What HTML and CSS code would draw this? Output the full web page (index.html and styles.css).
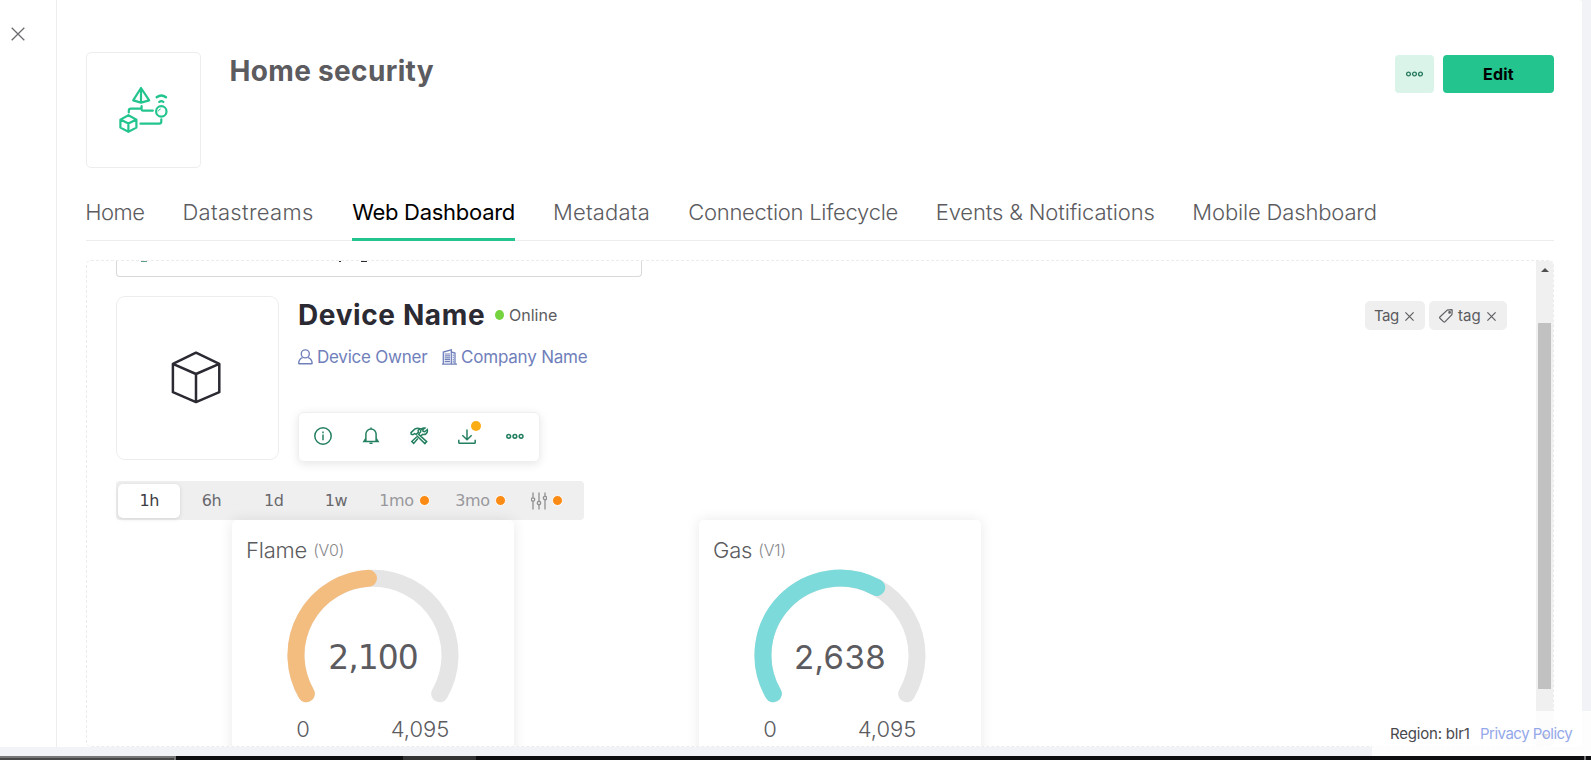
FILE: index.html
```html
<!DOCTYPE html>
<html lang="en">
<head>
<meta charset="utf-8">
<title>Home security</title>
<link rel="stylesheet" href="styles.css">
</head>
<body>
<div class="page">
  <div class="shell">
    <aside class="rail">
      <svg class="rail-close" width="14" height="14" viewBox="0 0 14 14"><path d="M.7.7l12.6 12.6M13.3.7L.7 13.3"/></svg>
    </aside>
    <main class="main">
      <header class="header">
        <div class="logo">
          <svg width="60" height="60" viewBox="114 80 60 60" fill="none" stroke="#24c48e" stroke-width="2.200" stroke-linejoin="round" stroke-linecap="round">
            <path d="M141 88l-7.800 12.400 7.800 2.200 8.200-2.200zM141 88v14.400"/>
            <path d="M141.600 106v2.700M128.800 112.400v-1.600q0-2.100 2.100-2.100h9.600q1.200 0 1.200 1t1.200 1h9.900"/>
            <path d="M140.500 123.700h18.600q2.200 0 2.200-2.200v-2.200"/>
            <circle cx="161.300" cy="111.400" r="5.200"/>
            <path d="M158.300 111a3 3 0 0 1 2-2" stroke-width="1"/>
            <path d="M156.700 97.200q4.600-3.600 9.300 0" stroke-width="2.400"/>
            <path d="M159.200 101.800q2.100-1.400 4.200 0"/>
            <path d="M128.400 115.200l8 4.400v8l-8 4.200-8-4.200v-8zM120.400 119.600l8 4 8-4M128.400 123.600v8"/>
          </svg>
        </div>
        <h1 class="title">Home security</h1>
        <div class="actions">
          <button class="btn-more"><svg width="18" height="6" viewBox="0 0 18 6" fill="none" stroke="#2a7c60" stroke-width="1.400"><circle cx="2.500" cy="3" r="1.900"/><circle cx="8.500" cy="3" r="1.900"/><circle cx="14.500" cy="3" r="1.900"/></svg></button>
          <button class="btn-edit">Edit</button>
        </div>
      </header>

      <nav class="tabs">
        <a class="tab t-home">Home</a>
        <a class="tab t-data">Datastreams</a>
        <a class="tab t-web active">Web Dashboard</a>
        <a class="tab t-meta">Metadata</a>
        <a class="tab t-conn">Connection Lifecycle</a>
        <a class="tab t-events">Events &amp; Notifications</a>
        <a class="tab t-mobile">Mobile Dashboard</a>
      </nav>

      <section class="dashboard">
        <div class="viewport">
          <div class="notice"><i class="mark mark-icon"></i><i class="mark mark-comma"></i><i class="mark mark-tail"></i></div>

          <div class="device">
            <div class="device-pic">
              <svg width="52" height="54" viewBox="0 0 52 54" fill="none" stroke="#2b2a33" stroke-width="2.500" stroke-linejoin="round"><path d="M26 1.700L49.300 12.800v28.400L26 51.100 2.900 41.200V12.800zM2.900 12.800L26 23l23.300-10.200M26 23v28"/></svg>
            </div>
            <div class="device-info">
              <div class="name-row">
                <h2 class="device-name">Device Name</h2>
                <span class="status-dot"></span>
                <span class="status">Online</span>
              </div>
              <div class="owner-row">
                <svg width="15" height="16" viewBox="0 0 15 16" fill="none" stroke="#7080bb" stroke-width="1.400"><circle cx="7.300" cy="4.900" r="4"/><path d="M4.500 8.600C2 9.600.700 11.500.700 14.200q0 .600.600.600h12.200q.600 0 .600-.600c0-2.700-1.400-4.600-3.900-5.600"/></svg>
                <span class="owner">Device Owner</span>
                <svg class="building" width="15" height="16" viewBox="0 0 15 16" fill="none" stroke="#7080bb" stroke-width="1.300"><path d="M0 15.200h15M1.300 15V3l8-2.200V15M9.300 3l3.700 1V15"/><path d="M2.600 5h5.400M2.600 6.900h5.400M2.600 8.800h5.400M2.600 10.700h5.400M2.600 12.600h5.400" stroke-width="1.200"/><path d="M11.200 5.500v8.500" stroke-width="1.100" stroke-dasharray="1.600 .6"/></svg>
                <span class="company">Company Name</span>
              </div>
              <div class="toolbar">
                <svg class="tool" width="20" height="20" viewBox="0 0 20 20"><circle cx="10" cy="10" r="8.200"/><path d="M10 8.500v5.800M10 5.600v1.600"/></svg>
                <svg class="tool" width="20" height="20" viewBox="0 0 20 20"><path d="M10 1.400v1.500M4.900 14.700V8.100a5.100 5.100 0 0 1 10.200 0v6.600M4.900 12.500l-2 3h14.200l-2-3"/><path d="M8.500 16.500h3v1.500h-3z" fill="#24805f" stroke="none"/></svg>
                <svg class="tool" width="20" height="20" viewBox="0 0 20 20"><g stroke-width="1.500"><path d="M2.200 8.300L2 6.600 6 2.900c1.500-.8 3.600-.9 5.300-.2L9.100 4.300l.3 1.900-2.200 2.200-1.600-.8-1.800 1.200z"/><path d="M9.100 7.900l8.600 7.700-1.800 2L7.500 9.500M11.800 9.900l1.900-1.500c1.900.3 4-.7 4.600-2.500.3-.9.200-1.700 0-2.400l-2.500 2.200-1.700-.4-.3-1.700 2-1.500c-2.500-.5-4.500 1.300-4.200 3.900L9.900 7.700M8.900 12.600l-4.200 4.800-1.900-1.900 4.800-4.500"/></g></svg>
                <span class="download">
                  <svg class="tool" width="20" height="20" viewBox="0 0 20 20"><path d="M10 3.500v10.200M5.300 9.300l4.700 4.500 4.700-4.500M1.800 13.700v2.800q0 .800.800.800h14.800q.800 0 .800-.800v-2.800"/></svg>
                  <i class="badge"></i>
                </span>
                <svg class="tool" width="20" height="20" viewBox="0 0 20 20"><circle cx="3.700" cy="10.300" r="1.900"/><circle cx="9.900" cy="10.300" r="1.900"/><circle cx="16.100" cy="10.300" r="1.900"/></svg>
              </div>
            </div>
            <div class="tags">
              <span class="tag tag-plain">Tag<svg class="x" width="9" height="9" viewBox="0 0 9 9"><path d="M.4.4l8.200 8.200M8.600.4L.4 8.600"/></svg></span>
              <span class="tag tag-icon"><svg class="tag-glyph" width="14" height="14" viewBox="0 0 14 14" fill="none" stroke="#5e5e63" stroke-width="1.200" stroke-linejoin="round"><path d="M8.200 1.100l4.300-.4q.7 0 .7.700l-.3 4.200-7 7.300q-.6.500-1.200 0L.9 9.200q-.5-.6 0-1.200z"/><circle cx="10.600" cy="3.400" r=".8"/></svg><span class="tag-label">tag</span><svg class="x" width="9" height="9" viewBox="0 0 9 9"><path d="M.4.4l8.200 8.200M8.600.4L.4 8.600"/></svg></span>
            </div>
          </div>

          <div class="ranges">
            <span class="range selected">1h</span>
            <span class="range">6h</span>
            <span class="range">1d</span>
            <span class="range">1w</span>
            <span class="range locked">1mo<i class="dot"></i></span>
            <span class="range locked">3mo<i class="dot"></i></span>
            <span class="range locked filter"><svg width="16" height="18" viewBox="0 0 16 18" fill="none" stroke="#8f8f93" stroke-width="1.300"><path d="M2 .5v5.200M2 9.300v8.200M8 .5v8.700M8 12.800v4.700M14 .5v3.700M14 7.800v9.700"/><circle cx="2" cy="7.500" r="1.700"/><circle cx="8" cy="11" r="1.700"/><circle cx="14" cy="6" r="1.700"/></svg><i class="dot"></i></span>
          </div>

          <div class="cards">
            <article class="card">
              <h3 class="card-title">Flame <span class="pin">(V0)</span></h3>
              <div class="gauge">
                <svg width="174" height="135" viewBox="0 0 174 135" fill="none" stroke-width="17" stroke-linecap="round"><path stroke="#e5e5e5" d="M20.300 124.700A77 77 0 1 1 153.700 124.700"/><path stroke="#f4bd80" d="M20.300 124.700A77 77 0 0 1 82.500 9.300"/></svg>
                <span class="value">2,100</span>
              </div>
              <div class="limits"><span>0</span><span>4,095</span></div>
            </article>
            <article class="card">
              <h3 class="card-title">Gas <span class="pin">(V1)</span></h3>
              <div class="gauge">
                <svg width="174" height="135" viewBox="0 0 174 135" fill="none" stroke-width="17" stroke-linecap="round"><path stroke="#e5e5e5" d="M20.300 124.700A77 77 0 1 1 153.700 124.700"/><path stroke="#7cdbda" d="M20.300 124.700A77 77 0 0 1 123.700 18.500"/></svg>
                <span class="value plain">2,638</span>
              </div>
              <div class="limits"><span>0</span><span>4,095</span></div>
            </article>
          </div>
        </div>
        <div class="scrollbar">
          <i class="arrow-up"></i>
          <i class="thumb"></i>
          <i class="arrow-down"></i>
        </div>
      </section>
    </main>
  </div>
  <footer class="legal"><span class="region">Region: blr1</span><a class="privacy">Privacy Policy</a></footer>
</div>
<div class="taskbar"><i class="task-a"></i><i class="task-b"></i><i class="task-end"></i></div>
</body>
</html>
```
FILE: styles.css
```css
* { box-sizing: border-box; }
body {
  margin: 0;
  height: 760px;
  overflow: hidden;
  font-family: Inter, "Liberation Sans", sans-serif;
  color: #5b5b60;
}
h1, h2, h3 { margin: 0; }
svg { display: block; flex: none; }
i { display: block; flex: none; }

.page { position: relative; height: 756px; background: #f2f3f7; }
.shell {
  display: flex;
  width: 1582px;
  height: 747px;
  background: #fff;
  border-radius: 0 3px 5px 0;
  overflow: hidden;
}
.rail { width: 57px; border-right: 1px solid #ededed; padding: 27px 0 0 10.5px; }
.rail-close { stroke: #6b6b70; stroke-width: 1.3; }
.main { flex: 1; padding: 52px 28px 0 29px; }

.header { display: flex; height: 116px; }
.logo {
  width: 115px;
  border: 1px solid #ededed;
  border-radius: 5px;
  padding: 27px 0 0 27px;
}
.title {
  margin: 1px 0 0 28.5px;
  height: 36px;
  font-size: 28px;
  line-height: 36px;
  font-weight: 700;
  letter-spacing: 0.33px;
}
.actions { display: flex; gap: 9px; margin: 3px 0 0 auto; height: 38px; }
.btn-more, .btn-edit { border: 0; border-radius: 4px; padding: 0; display: flex; align-items: center; justify-content: center; }
.btn-more { width: 39px; background: #daf4ea; }
.btn-edit { width: 111px; background: #24c48e; color: #000; font: 700 16px Inter, sans-serif; letter-spacing: 0.2px; }

.tabs { display: flex; gap: 38.6px; height: 73px; border-bottom: 1px solid #ededed; }
.tab {
  height: 73px;
  padding-top: 32px;
  font-size: 22px;
  line-height: 24px;
  font-weight: 300;
  white-space: nowrap;
}
.tab:not(.active) { text-indent: -0.8px; }
.t-home { width: 58.6px; letter-spacing: -0.5px; }
.t-data { width: 130.4px; letter-spacing: 0.32px; }
.t-web { width: 163px; letter-spacing: -0.28px; }
.t-meta { width: 96.6px; letter-spacing: 0.2px; }
.t-conn { width: 209px; letter-spacing: -0.26px; }
.t-events { width: 218px; letter-spacing: -0.15px; }
.t-mobile { width: 184px; letter-spacing: -0.15px; }
.tab.active { color: #000; font-weight: 400; border-bottom: 3px solid #24c48e; }

.dashboard {
  display: flex;
  margin-top: 19px;
  height: 487px;
  border: 1px dashed #ececec;
  border-radius: 5px;
  overflow: hidden;
}
.viewport { flex: 1; padding: 0 29px; overflow: hidden; }
.notice {
  display: flex;
  width: 526px;
  height: 16px;
  border: 1px solid #d9d9d9;
  border-top: 0;
  border-radius: 0 0 4px 4px;
}
.mark { background: #2b2a33; height: 1px; }
.mark-icon { margin-left: 24px; width: 6px; background: #5f9c86; }
.mark-comma { margin-left: 192px; width: 2px; }
.mark-tail { margin-left: 20px; width: 6px; }

.device { display: flex; height: 165px; margin-top: 19px; }
.device-pic {
  width: 163px;
  height: 164px;
  border: 1px solid #ededed;
  border-radius: 9px;
  padding: 54px 0 0 53px;
}
.device-info { width: 300px; margin-left: 19px; }
.name-row { display: flex; align-items: center; height: 36px; margin-top: 1px; }
.device-name { width: 197px; font-size: 28px; line-height: 36px; font-weight: 700; color: #2b2a33; letter-spacing: 0.62px; white-space: nowrap; }
.status-dot { width: 9px; height: 10px; border-radius: 50%; background: #75d33f; }
.status { margin-left: 5px; font-size: 16px; line-height: 24px; }
.owner-row { display: flex; align-items: center; height: 24px; margin-top: 12px; font-size: 17px; line-height: 24px; color: #7080bb; white-space: nowrap; }
.owner { margin-left: 4px; width: 125px; letter-spacing: -0.24px; }
.company { margin-left: 4px; letter-spacing: -0.2px; }
.toolbar {
  display: flex;
  gap: 28px;
  width: 242px;
  height: 50px;
  margin-top: 43px;
  padding: 12.5px 0 0 14px;
  border-radius: 6px;
  border: 1px solid #efefef;
  box-shadow: 0 2px 10px rgba(0, 0, 0, 0.1);
}
.tool { fill: none; stroke: #24805f; stroke-width: 1.5; }
.download { position: relative; }
.badge { position: absolute; left: 14px; top: -5px; width: 10px; height: 10px; border-radius: 50%; background: #fbad15; }
.tags { display: flex; gap: 4px; margin: 5px 0 0 auto; height: 29px; }
.tag { display: flex; align-items: center; border-radius: 5px; background: #efefef; font-size: 15px; line-height: 24px; }
.tag-plain { width: 60px; padding-left: 9px; gap: 6px; letter-spacing: -0.5px; }
.tag-icon { width: 78px; padding-left: 10px; }
.tag-label { width: 29px; margin-left: 5px; }
.tag-glyph { margin-top: 1px; }
.x { stroke: #5e5e63; stroke-width: 1.2; margin-top: 2px; }

.ranges {
  display: flex;
  align-items: center;
  width: 468px;
  height: 39px;
  margin-top: 20px;
  padding-left: 2px;
  border-radius: 4px;
  background: #efefef;
  color: #68686d;
  font: 16px "DejaVu Sans", sans-serif;
}
.range { display: flex; flex: none; align-items: center; justify-content: center; width: 62.3px; height: 34px; letter-spacing: -0.4px; }
.range.selected { color: #3d3c44; background: #fff; border-radius: 5px; box-shadow: 0 1px 4px rgba(0, 0, 0, 0.12); }
.range.locked { width: 76px; justify-content: flex-start; padding-left: 12px; gap: 5px; color: #98989c; letter-spacing: -0.4px; }
.dot { width: 11px; height: 11px; border-radius: 50%; border: 1.5px solid #fff; background: #fb8b15; }

.cards { position: relative; display: flex; gap: 185px; margin-left: 116px; }
.card {
  width: 282px;
  height: 250px;
  padding-top: 18px;
  background: #fff;
  border-radius: 5px;
  box-shadow: 0 0 14px rgba(0, 0, 0, 0.09);
}
.card-title { display: flex; gap: 6px; padding-left: 14px; height: 24px; font-size: 22px; line-height: 24px; font-weight: 300; letter-spacing: -0.2px; white-space: nowrap; }
.pin { font-size: 16px; line-height: 24px; color: #88888c; letter-spacing: -0.1px; }
.gauge { display: grid; justify-content: center; margin-top: 7px; height: 135px; }
.gauge svg, .value { grid-area: 1 / 1; }
.value { margin-top: 69px; height: 40px; text-align: center; font: 33px/40px "DejaVu Sans", sans-serif; letter-spacing: -1px; }
.value.plain { margin-top: 68px; font-family: Inter, sans-serif; letter-spacing: 0.4px; }
.limits { display: grid; grid-template-columns: 117px 117px; justify-content: center; margin-top: 13px; padding-right: 23px; text-align: center; font-size: 22px; line-height: 24px; font-weight: 300; }

.scrollbar { display: flex; flex-direction: column; align-items: center; width: 17px; background: #f0f0f0; }
.arrow-up { margin-top: 7px; border: 4px solid transparent; border-top: 0; border-bottom-color: #505050; }
.thumb { width: 13px; height: 366px; margin-top: 51px; background: #c1c1c1; }
.arrow-down { margin-top: 45px; border: 4px solid transparent; border-bottom: 0; border-top-color: #505050; }

.legal {
  position: absolute;
  right: 0;
  bottom: 0;
  display: flex;
  width: 219px;
  height: 45px;
  padding: 11px 0 0 18px;
  background: rgba(255, 255, 255, 0.8);
  font-size: 15px;
  line-height: 24px;
  white-space: nowrap;
}
.region { width: 90px; color: #48484d; letter-spacing: -0.2px; }
.privacy { color: #94a8ea; letter-spacing: -0.5px; }

.taskbar { display: flex; height: 4px; background: #0e0e10; }
.task-a { width: 176px; border-top: 2px solid #777; border-right: 2px solid #777; background: #484848; }
.task-b { width: 73px; margin-left: 227px; background: #333; }
.task-end { width: 2px; margin-left: auto; margin-right: 5px; background: #777; }
```
